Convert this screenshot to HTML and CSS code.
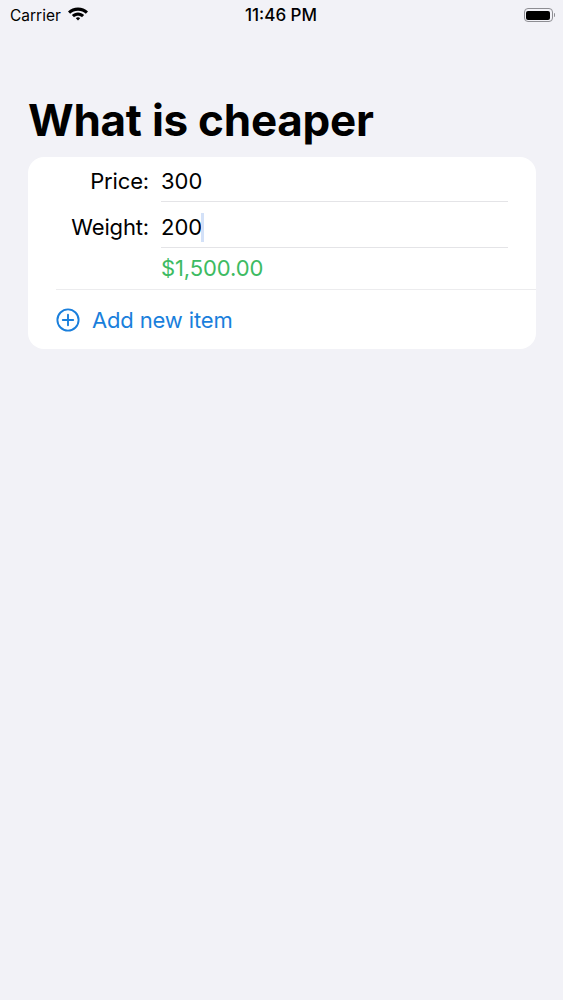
FILE: index.html
```html
<!DOCTYPE html>
<html>
<head>
  <title>What is cheaper</title>
  <link rel="stylesheet" href="styles.css">
</head>
<body>

  <div class="status-bar">
    <div class="status-left">
      <span>Carrier</span>
      <svg class="wifi" viewBox="0.7 2.2 18.6 12.2" width="20" height="14">
        <path d="M10 2.2c3.600 0 6.800 1.400 9.300 3.800l-2 2.100C15.400 6.300 12.800 5.200 10 5.200S4.600 6.300 2.700 8.100l-2-2.100C3.200 3.600 6.400 2.200 10 2.200z" fill="#000"/>
        <path d="M10 7c2.200 0 4.200.9 5.700 2.300l-2 2.100C12.700 10.500 11.400 10 10 10s-2.700.5-3.700 1.400l-2-2.100C5.800 7.900 7.800 7 10 7z" fill="#000"/>
        <path d="M10 11.400c.8 0 1.500.3 2 .8L10 14.400l-2-2.200c.5-.5 1.200-.8 2-.8z" fill="#000"/>
      </svg>
    </div>
    <div class="status-time">11:46 PM</div>
    <div class="battery">
      <div class="battery-body"><div class="battery-fill"></div></div>
      <div class="battery-cap"></div>
    </div>
  </div>

  <h1 class="page-title">What is cheaper</h1>

  <div class="card">
    <div class="field-row">
      <div class="field-label">Price:</div>
      <div class="field-value">300</div>
    </div>
    <div class="field-row">
      <div class="field-label">Weight:</div>
      <div class="field-value">200<span class="caret"></span></div>
    </div>
    <div class="result">$1,500.00</div>
    <div class="add-row">
      <svg class="add-icon" viewBox="0 0 24 24" width="24" height="24">
        <circle cx="12" cy="12" r="10.6" fill="none" stroke="#1a7fdc" stroke-width="1.900"/>
        <path d="M12 6.800v10.400M6.800 12h10.400" fill="none" stroke="#1a7fdc" stroke-width="1.900" stroke-linecap="round"/>
      </svg>
      <span>Add new item</span>
    </div>
  </div>

</body>
</html>
```

FILE: styles.css
```css
body {
  font-family: Inter, "Liberation Sans", sans-serif;
  background-color: #f2f2f7;
  color: #000;
  margin: 0;
  padding: 0;
}

.status-bar {
  display: grid;
  grid-template-columns: 1fr auto 1fr;
  align-items: center;
  height: 30px;
  padding: 0 8px 0 10px;
  font-size: 15.500px;
}

.status-left {
  display: flex;
  align-items: center;
  gap: 7px;
}

.wifi {
  margin-top: -3px;
}

.status-time {
  font-size: 17px;
  font-weight: 500;
  margin-left: -3px;
}

.battery {
  display: flex;
  align-items: center;
  justify-content: flex-end;
}

.battery-body {
  width: 29px;
  height: 14px;
  padding: 1.500px;
  box-sizing: border-box;
  border: 1px solid #8e8e93;
  border-radius: 4px;
}

.battery-fill {
  height: 100%;
  background-color: #000;
  border-radius: 2px;
}

.battery-cap {
  width: 1.500px;
  height: 4px;
  margin-left: 1px;
  background-color: #8e8e93;
  border-radius: 0 1px 1px 0;
}

.page-title {
  font-size: 44px;
  font-weight: 700;
  line-height: 54px;
  letter-spacing: -0.25px;
  margin: 63px 0 10px 28px;
}

.card {
  margin: 0 27px 0 28px;
  background-color: #fff;
  border-radius: 16px;
  padding-top: 1px;
  font-size: 22px;
}

.field-row {
  display: grid;
  grid-template-columns: 121px 1fr;
  column-gap: 12px;
  height: 46px;
  margin-right: 28px;
}

.field-label {
  text-align: right;
  line-height: 47px;
  letter-spacing: -0.15px;
}

.field-value {
  line-height: 47px;
  height: 43px;
  border-bottom: 1px solid #e4e4e7;
}

.caret {
  display: inline-block;
  width: 3px;
  height: 29px;
  margin-left: -1px;
  vertical-align: -7px;
  background-color: #d3e1f8;
}

.result {
  margin: -1px 0 0 133px;
  height: 40px;
  line-height: 38px;
  letter-spacing: -0.1px;
  color: #3dbb62;
}

.add-row {
  display: flex;
  align-items: center;
  gap: 13px;
  height: 59px;
  margin-left: 28px;
  border-top: 1px solid #ececee;
  letter-spacing: -0.15px;
  color: #1a7fdc;
}

.add-row span {
  margin-left: -1px;
}

.add-icon {
  flex: none;
}
```
